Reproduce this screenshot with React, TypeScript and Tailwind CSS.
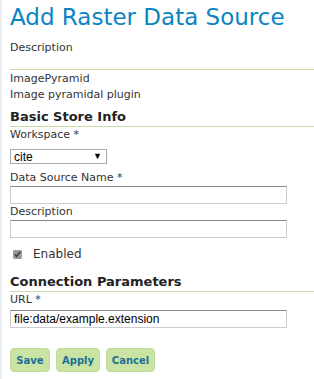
export default function App() {
  return (
    <main className="min-h-[379px] w-[314px] border-l-2 border-[#e8eef1] bg-white pl-[8px] font-['DejaVu_Sans',Verdana,sans-serif] text-[11px] text-[#333]">
      <h1 className="pt-[2px] text-[23px] leading-[30px] text-[#0b84c1]">Add Raster Data Source</h1>

      <p className="mt-[9px] leading-[14px]">Description</p>

      <div className="mt-[14px] border-t border-[#c6dfa4] pt-[1px]">
        <p className="leading-[16px]">ImagePyramid</p>
        <p className="leading-[16px]">Image pyramidal plugin</p>
      </div>

      <h2 className="mt-[6px] border-b border-[#c6dfa4] pb-[1px] text-[13px] font-bold leading-[16px] text-[#222]">
        Basic Store Info
      </h2>

      <label className="mt-[1px] block leading-[14px]">Workspace *</label>
      <div className="mt-[7px] flex h-[15px] w-[97px] items-center justify-between border border-[#aaa] pl-[3px] pr-[4px] font-['Liberation_Sans',Arial,sans-serif] text-[12px] text-black">
        <span>cite</span>
        <span className="text-[9px]">▼</span>
      </div>

      <label className="mt-[7px] block leading-[14px]">Data Source Name *</label>
      <div className="mt-[1px] h-[18px] w-[277px] border border-[#ccc] border-t-[#888]" />

      <label className="mt-[1px] block leading-[14px]">Description</label>
      <div className="mt-[1px] h-[18px] w-[277px] border border-[#ccc] border-t-[#888]" />

      <label className="mt-[9px] flex items-center gap-[11px] leading-[14px]">
        <input type="checkbox" defaultChecked className="ml-[3px] h-[9px] w-[9px] accent-[#999]" />
        <span className="text-[12px]">Enabled</span>
      </label>

      <h2 className="mt-[13px] border-b border-[#c6dfa4] pb-[1px] text-[13px] font-bold leading-[16px] text-[#222]">
        Connection Parameters
      </h2>

      <label className="mt-[1px] block leading-[14px]">URL *</label>
      <div className="mt-[3px] flex h-[18px] w-[277px] items-center border border-[#ccc] border-t-[#888] pl-[3px] font-['Liberation_Sans',Arial,sans-serif] text-[12px] text-black">
        file:data/example.extension
      </div>

      <div className="mt-[20px] flex gap-[6px]">
        <button className="h-[24px] w-[40px] rounded-[4px] border border-[#c2dca0] bg-[#c9e3a3] text-[10px] font-bold text-[#1d6f98]">
          Save
        </button>
        <button className="h-[24px] w-[44px] rounded-[4px] border border-[#c2dca0] bg-[#c9e3a3] text-[10px] font-bold text-[#1d6f98]">
          Apply
        </button>
        <button className="h-[24px] w-[49px] rounded-[4px] border border-[#c2dca0] bg-[#c9e3a3] text-[10px] font-bold text-[#1d6f98]">
          Cancel
        </button>
      </div>
    </main>
  );
}
